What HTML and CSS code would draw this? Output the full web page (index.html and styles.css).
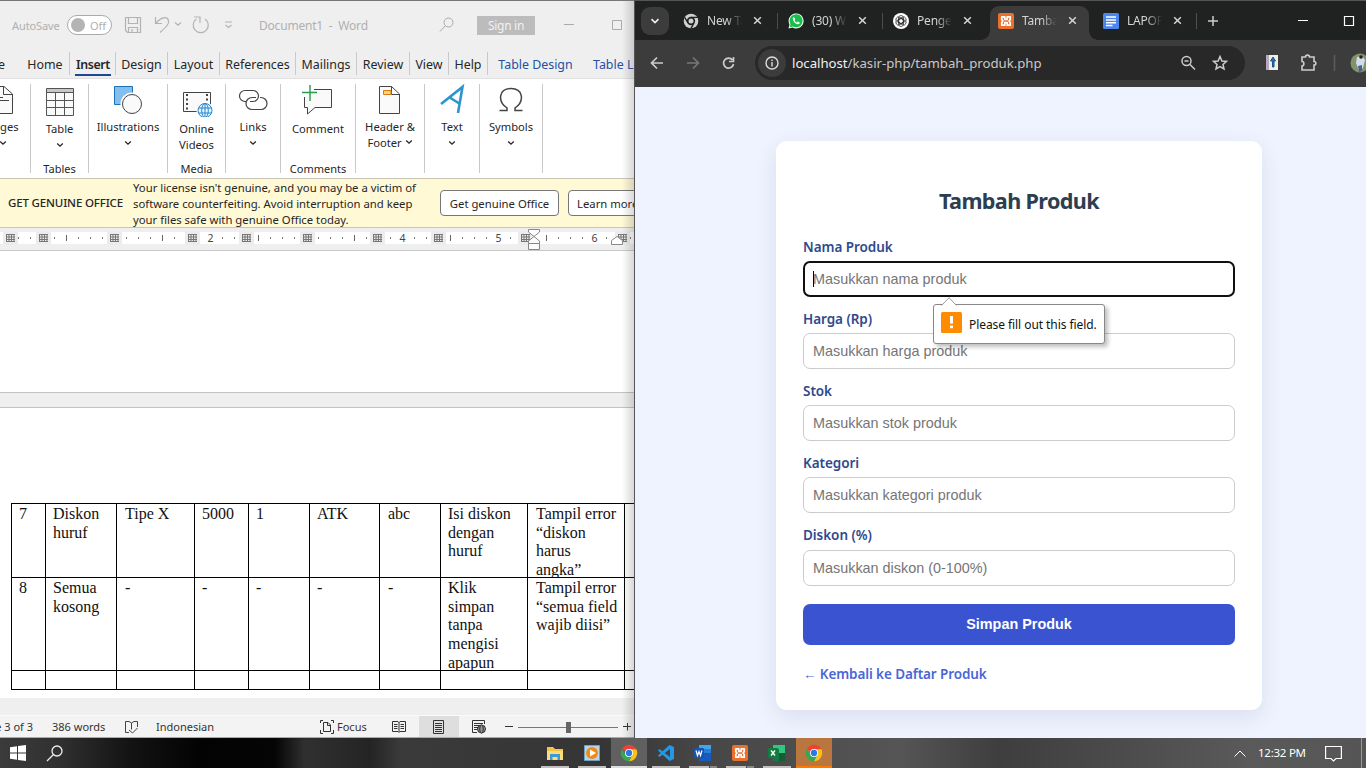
FILE: index.html
```html
<!DOCTYPE html>
<html lang="id">
<head>
<meta charset="utf-8">
<title>Tambah Produk</title>
<link rel="stylesheet" href="styles.css">
</head>
<body>
<svg width="0" height="0" class="defs">
  <symbol id="chev" viewBox="0 0 8 6"><path d="M1.2 1.5 4 4.2 6.8 1.5" fill="none" stroke="currentColor" stroke-width="1.3"/></symbol>
  <symbol id="close" viewBox="0 0 10 10"><path d="M1.3 1.3 8.7 8.7M8.7 1.3 1.3 8.7" stroke="currentColor" stroke-width="1.7"/></symbol>
  <symbol id="chrome" viewBox="0 0 24 24">
    <path d="M12 12 2.5 6.5A11 11 0 0 1 21.5 6.5L12 7Z" fill="#ea4335"/>
    <path d="M12 12 12 7H21.8A11 11 0 0 1 12 23L16.3 14.5Z" fill="#fbc116"/>
    <path d="M12 12 16.3 14.5 12 23A11 11 0 0 1 2.5 6.5L7.7 14.5Z" fill="#34a853"/>
    <circle cx="12" cy="12" r="5.3" fill="#fff"/><circle cx="12" cy="12" r="4.2" fill="#2878e8"/>
  </symbol>
  <symbol id="xampp" viewBox="0 0 16 16"><rect width="16" height="16" rx="2" fill="#ec702c"/><path d="M6.800 3.800H3.800V6.700L5 8 3.800 9.300V12.200H6.800V9.600H9.200V12.200H12.200V9.300L11 8 12.200 6.700V3.800H9.200V6.400H6.800Z" fill="none" stroke="#fff" stroke-width="1.700" stroke-linejoin="round"/></symbol>
</svg>
<div class="desktop">
  <main class="windows">
    <section class="word">
      <header class="w-title">
        <span class="autosave">AutoSave</span>
        <span class="toggle"><i></i>Off</span>
        <svg class="qat" width="110" height="20" viewBox="0 0 110 20" fill="none" stroke="#b3b3b3" stroke-width="1.2">
          <path d="M1.5 2.5H16.500V17.500H3.500L1.500 15.500ZM4.500 2.500V8.500H13.500V2.500M4.500 17.500V12.500H13.500V17.500M8 17.500V14"/>
          <path d="M31.500 2V8.500H38M32 8C37 2 43 1 44.500 5.500 45.500 9 42 12 36 17.500"/>
          <path d="M51 7.500 54 10.200 57 7.500M72.500 4A7.500 7.500 0 1 0 81 4M76 8V2H70"/>
          <path d="M101 7H108M101.500 10 104.500 12.500 107.500 10"/>
        </svg>
        <span class="docname">Document1 &nbsp;-&nbsp; Word</span>
        <svg class="w-search" width="16" height="16" viewBox="0 0 16 16" fill="none" stroke="#aaa"><circle cx="9.500" cy="5.500" r="4.500"/><path d="M6 9 1 14.500"/></svg>
        <span class="signin">Sign in</span>
        <svg class="w-ctl" width="60" height="12" viewBox="0 0 60 12" fill="none" stroke="#aaa"><path d="M0 5.500H10M48.500 1.500H57.500V10.500H48.500Z"/></svg>
      </header>
      <nav class="w-tabs">
        <span class="t-file">e</span><span class="t-home">Home</span><span class="t-insert"><b>Insert</b></span><span class="t-design">Design</span><span class="t-layout">Layout</span><span class="t-ref">References</span><span class="t-mail">Mailings</span><span class="t-review">Review</span><span class="t-view">View</span><span class="t-help">Help</span><span class="t-td">Table Design</span><span class="t-tl">Table L</span>
      </nav>
      <div class="ribbon">
        <div class="grp g-pages"><svg class="ico" width="34" height="34" viewBox="0 0 34 34" fill="#fafafa" stroke="#444"><path d="M1 3.500H16L24.500 11V30.500H1"/><path d="M15.500 3.500V11.500H24M1 14.500H15M1 17.500H21" fill="none"/></svg><p>ges</p><svg class="cv"><use href="#chev"/></svg></div>
        <div class="grp g-table"><svg class="ico" width="34" height="34" viewBox="0 0 34 34" fill="#fafafa" stroke="#555"><path d="M3.500 5.500H30.500V32.500H3.500Z"/><path d="M4 6H30V9H4Z" fill="#c8c8c8" stroke="none"/><path d="M3.500 9.500H30.500M3.500 17.500H30.500M3.500 24.500H30.500M12.500 9.500V32.500M21.500 9.500V32.500" fill="none"/></svg><p class="low">Table</p><svg class="cv"><use href="#chev"/></svg><em>Tables</em></div>
        <div class="grp g-ill"><svg class="ico" width="34" height="34" viewBox="0 0 34 34"><path d="M3.500 3.500H21.500V21.500H3.500Z" fill="#83beec" stroke="#1e70b8"/><circle cx="21" cy="21" r="11.500" fill="#fff"/><circle cx="21" cy="21" r="9.500" fill="#fafafa" stroke="#444"/></svg><p>Illustrations</p><svg class="cv"><use href="#chev"/></svg></div>
        <div class="grp g-video"><svg class="ico" width="34" height="34" viewBox="0 0 34 34" fill="none" stroke="#444"><path d="M3.500 9.500H30.500V28.500H3.500Z" fill="#fafafa"/><path d="M7 11V27M27 11V18" stroke-dasharray="2 2.500" stroke-width="2"/><circle cx="25" cy="27.500" r="8.500" fill="#fff" stroke="none"/><g stroke="#2287d0"><circle cx="25" cy="27.500" r="7" fill="#e8f5ff"/><ellipse cx="25" cy="27.500" rx="3.300" ry="7"/><path d="M18.500 25H31.500M18.500 30H31.500M25 20.500V34.500"/></g></svg><p class="low">Online<br>Videos</p><em>Media</em></div>
        <div class="grp g-links"><svg class="ico" width="34" height="34" viewBox="0 0 34 34" fill="none" stroke="#444" stroke-width="1.200"><path d="M10 18.500H9A5.500 5.500 0 0 1 9 7.500H17A5.500 5.500 0 0 1 17 18.500H14"/><path d="M24 14.500H25A5.500 5.500 0 0 1 25 26.500H16A6 6 0 0 1 16 14.500H20"/></svg><p>Links</p><svg class="cv"><use href="#chev"/></svg></div>
        <div class="grp g-comment"><svg class="ico" width="34" height="34" viewBox="0 0 34 34" fill="none" stroke="#444"><path d="M13 6.500H30.500V24.500H14L6.500 31V24.500H3.500V14" fill="#fafafa"/><path d="M9 2V18M1 9.500H16" stroke="#249b4d" stroke-width="1.400"/></svg><p class="low">Comment</p><em>Comments</em></div>
        <div class="grp g-header"><svg class="ico" width="34" height="34" viewBox="0 0 34 34" fill="#fafafa" stroke="#444"><path d="M6.500 3.500H18.500L26.500 11V30.500H6.500ZM18.500 3.500V11.500H26"/><path d="M10.500 7.500H18V11.500H10.500Z" fill="#fbd27d" stroke="#d87912"/></svg><p>Header &amp;<br>Footer <svg class="cv in"><use href="#chev"/></svg></p></div>
        <div class="grp g-text"><svg class="ico" width="34" height="34" viewBox="0 0 34 34" fill="none" stroke="#2c94cf" stroke-width="2.600"><path d="M6 21 27.500 4 23 30M14 14 25 21"/></svg><p>Text</p><svg class="cv"><use href="#chev"/></svg></div>
        <div class="grp g-sym"><svg class="ico" width="34" height="34" viewBox="0 0 34 34" fill="none" stroke="#444" stroke-width="1.500"><path d="M5.500 27.500H13V25C3 18 5 5.500 17 5.500 29 5.500 31 18 21 25V27.500H28.500"/></svg><p>Symbols</p><svg class="cv"><use href="#chev"/></svg></div>
      </div>
      <div class="license">
        <strong>GET GENUINE OFFICE</strong>
        <p>Your license isn't genuine, and you may be a victim of<br>software counterfeiting. Avoid interruption and keep<br>your files safe with genuine Office today.</p>
        <span class="wbtn get">Get genuine Office</span><span class="wbtn learn">Learn more</span>
      </div>
      <svg class="ruler" width="634" height="22" viewBox="0 0 634 22">
        <defs>
          <pattern id="dots" x="6" width="12" height="20" patternUnits="userSpaceOnUse"><rect y="9" width="1" height="2" fill="#777"/></pattern>
          <pattern id="half" x="66" width="96" height="23" patternUnits="userSpaceOnUse"><rect y="7" width="1" height="6" fill="#666"/></pattern>
          <g id="mark"><rect x="-7" y="3" width="15" height="14" fill="#ececec"/><path d="M-3.500 6V14M-1 6V14M1.500 6V14M4 6V14M-4 6.500H5M-4 9H5M-4 11.500H5M-4 13.500H5" stroke="#777"/></g>
        </defs>
        <rect width="634" height="23" fill="#efefef"/><rect y="4" width="634" height="12" fill="#fff"/>
        <rect y="0" width="634" height="20" fill="url(#dots)"/><rect width="634" height="20" fill="url(#half)"/>
        <use href="#mark" x="10"/><use href="#mark" x="43"/><use href="#mark" x="114"/><use href="#mark" x="192"/><use href="#mark" x="246"/><use href="#mark" x="307"/><use href="#mark" x="377"/><use href="#mark" x="438"/><use href="#mark" x="525"/><use href="#mark" x="622"/>
        <g class="nums"><path d="M206 4h9v12h-9zM398 4h9v12h-9zM494 4h9v12h-9zM590 4h9v12h-9z" fill="#fff"/><text x="210.500" y="14">2</text><text x="402.500" y="14">4</text><text x="498.500" y="14">5</text><text x="594.500" y="14">6</text></g>
        <g fill="#fff" stroke="#888"><path d="M528.500 1.500H539.500V4L534 8.500 528.500 4ZM528.500 15.500V13L534 8.500 539.500 13V15.500ZM528.500 15.500H539.500V21.500H528.500ZM611.500 16.500V12.500L617 8.500 622.500 12.500V16.500Z"/></g>
      </svg>
      <div class="pages">
        <div class="sheet upper"></div>
        <div class="sheet lower">
          <table>
            <colgroup><col class="c1"><col class="c2"><col class="c3"><col class="c4"><col class="c5"><col class="c6"><col class="c7"><col class="c8"><col class="c9"><col class="c10"></colgroup>
            <tr class="r1"><td>7</td><td>Diskon<br>huruf</td><td>Tipe X</td><td>5000</td><td>1</td><td>ATK</td><td>abc</td><td>Isi diskon<br>dengan<br>huruf</td><td><div class="clip">Tampil error<br>“diskon<br>harus<br>angka”</div></td><td></td></tr>
            <tr class="r2"><td>8</td><td>Semua<br>kosong</td><td>-</td><td>-</td><td>-</td><td>-</td><td>-</td><td><div class="clip">Klik<br>simpan<br>tanpa<br>mengisi<br>apapun</div></td><td>Tampil error<br>“semua field<br>wajib diisi”</td><td></td></tr>
            <tr class="r3"><td></td><td></td><td></td><td></td><td></td><td></td><td></td><td></td><td></td><td></td></tr>
          </table>
        </div>
      </div>
      <footer class="status">
        <span class="s-page">Page 3 of 3</span><span class="s-words">386 words</span>
        <svg class="s-proof" width="15" height="14" viewBox="0 0 15 14" fill="none" stroke="#444"><path d="M5 12.500H1.500V1.500H5L7.500 3 10 1.500H13.500V7M7.500 3V9.500M5 10 8.500 13 13.500 8"/></svg>
        <span class="s-lang">Indonesian</span>
        <svg class="s-focus" width="14" height="14" viewBox="0 0 14 14" fill="none" stroke="#333"><path d="M3 .500H.500V3M.500 10V13.500H3M11 .500H13.500V3M13.500 10V13.500H11M3.500 2.500H8L10.500 5V11.500H3.500ZM7.500 2.500V5.500H10"/></svg>
        <span class="s-ft">Focus</span>
        <span class="view v1"><svg width="14" height="14" viewBox="0 0 14 14" fill="none" stroke="#333"><path d="M.500 1.500H6L7 2.500 8 1.500H13.500V11.500H8L7 12.500 6 11.500H.500ZM7 2V12M2 4.500H5.500M2 6.500H5.500M2 8.500H5.500M8.500 4.500H12M8.500 6.500H12M8.500 8.500H12"/></svg></span>
        <span class="view v2"><svg width="12" height="14" viewBox="0 0 12 14" fill="none" stroke="#333"><path d="M.500 .500H10.500V13.500H.500ZM2 3.500H9M2 5.500H9M2 7.500H9M2 9.500H9M2 11.500H9"/></svg></span>
        <span class="view v3"><svg width="15" height="14" viewBox="0 0 15 14" fill="none" stroke="#333"><path d="M5 12.500H.500V.500H12.500V4M2 3.500H11M2 5.500H8M2 7.500H6M2 9.500H5"/><circle cx="9.500" cy="9" r="4"/><ellipse cx="9.500" cy="9" rx="1.800" ry="4"/><path d="M5.500 9H13.500M6 7H13M6 11H13"/></svg></span>
        <svg class="zoom" width="129" height="14" viewBox="0 0 129 14"><path d="M0 6.500H8M118 6.500H126M122.500 3V10.500" stroke="#333"/><path d="M13 7.500H113" stroke="#777"/><rect x="61" y="2" width="5" height="11" fill="#666"/></svg>
      </footer>
      <i class="edge"></i>
    </section>

    <section class="browser">
      <div class="strip">
        <span class="list"><svg width="10" height="8" viewBox="0 0 8 6"><use href="#chev"/></svg></span>
        <div class="tab"><svg width="16" height="16" viewBox="0 0 24 24"><circle cx="12" cy="12" r="11" fill="#cfcfcf"/><circle cx="12" cy="12" r="5" fill="#cfcfcf" stroke="#202121" stroke-width="2.500"/><path d="M12 6.500H22M7.500 15 2.500 6.500M16.500 15 12 23" stroke="#202121" stroke-width="2"/></svg><span>New Tab</span><svg class="x"><use href="#close"/></svg></div>
        <div class="tab sep"><svg width="16" height="16" viewBox="0 0 16 16"><path d="M.500 15.500 1.500 11.500A7.500 7.500 0 1 1 4.500 14.500Z" fill="#fff"/><path d="M1.700 14.300 2.500 11.200A6.500 6.500 0 1 1 4.900 13.500Z" fill="#18bf4b"/><path d="M5 4.500C4 7 7.500 12 11 11 12 10.500 11.800 9.500 11.500 9.300L9.800 8.500 9 9.500C8 9.200 7 8.200 6.500 7.200L7.200 6.300 6.500 4.500Z" fill="#fff"/></svg><span>(30) What</span><svg class="x"><use href="#close"/></svg></div>
        <div class="tab sep"><svg width="16" height="16" viewBox="0 0 16 16"><circle cx="8" cy="8" r="8" fill="#fff"/><g fill="none" stroke="#333" stroke-width=".800"><rect x="5.500" y="2.500" width="5" height="8" rx="2.500"/><rect x="5.500" y="2.500" width="5" height="8" rx="2.500" transform="rotate(60 8 8)"/><rect x="5.500" y="2.500" width="5" height="8" rx="2.500" transform="rotate(120 8 8)"/><rect x="5.500" y="2.500" width="5" height="8" rx="2.500" transform="rotate(180 8 8)"/><rect x="5.500" y="2.500" width="5" height="8" rx="2.500" transform="rotate(240 8 8)"/><rect x="5.500" y="2.500" width="5" height="8" rx="2.500" transform="rotate(300 8 8)"/></g></svg><span>Pengem</span><svg class="x"><use href="#close"/></svg></div>
        <div class="tab active"><svg width="16" height="16"><use href="#xampp"/></svg><span>Tambah</span><svg class="x"><use href="#close"/></svg></div>
        <div class="tab"><svg width="16" height="16" viewBox="0 0 16 16"><rect width="16" height="16" rx="1.500" fill="#4a86ee"/><path d="M3 4H13M3 7H13M3 9.800H13M3 12.500H9.500" stroke="#fff" stroke-width="1.500"/></svg><span>LAPORAN</span><svg class="x"><use href="#close"/></svg></div>
        <svg class="newtab" width="170" height="20" viewBox="0 0 170 20" fill="none"><path d="M.500 2V18" stroke="#505050"/><path d="M12 10H22M17 5V15" stroke="#ccc" stroke-width="1.500"/><path d="M102 9.500H112M148.500 5.500H157.500V14.500H148.500Z" stroke="#fff" stroke-width="1.200"/></svg>
      </div>
      <div class="toolbar">
        <svg class="nav" width="90" height="16" viewBox="0 0 90 16" fill="none" stroke-width="1.700"><path d="M14 8H3M8 2.500 2.500 8 8 13.500" stroke="#ccc"/><path d="M38 8H49M44 2.500 49.500 8 44 13.500" stroke="#777"/><path d="M83.500 5A5 5 0 1 0 84.500 9M84.500 2V6.500H80" stroke="#ccc"/></svg>
        <div class="url"><span class="info"><svg width="16" height="16" viewBox="0 0 16 16" fill="none" stroke="#ddd" stroke-width="1.400"><circle cx="8" cy="8" r="6"/><path d="M8 7V11.500M8 4.500V6"/></svg></span><span class="addr"><b>localhost</b>/kasir-php/tambah_produk.php</span>
          <svg width="50" height="16" viewBox="0 0 50 16" fill="none" stroke="#ccc" stroke-width="1.500"><circle cx="6.500" cy="6" r="4.500"/><path d="M10 9.500 15 14.500M4.500 6H8.500"/><path d="M40 1.500 41.900 6 46.500 6.400 43 9.500 44 14 40 11.600 36 14 37 9.500 33.500 6.400 38.100 6Z"/></svg></div>
        <svg class="ext" width="104" height="24" viewBox="0 0 104 24"><rect x="1" y="4" width="12" height="15" fill="#f1eee4"/><rect x="1" y="4" width="3" height="15" fill="#b9a8bd"/><path d="M7.500 16V10H5.500L8 6 10.500 10H9V16Z" fill="#2173bd" stroke="#17578f"/><path d="M37 6H40.500C40.500 3.500 44.500 3.500 44.500 6H49V10.500C51.500 10.500 51.500 14 49 14V19H37V15C39.500 15 39.500 10.500 37 10.500Z" fill="none" stroke="#ccc" stroke-width="1.600"/><path d="M69.500 4V20" stroke="#5c5c5c" stroke-width="1.500"/><circle cx="95" cy="12" r="9.500" fill="#829369"/><path d="M92 6 97 5 100 9 98 17 94 20 91 12Z" fill="#d4dcec"/><path d="M93 15 97 14 97 20 94 21Z" fill="#48628f"/><circle cx="96" cy="6" r="1.800" fill="#222"/></svg>
      </div>
      <div class="site">
        <form class="card">
          <h1>Tambah Produk</h1>
          <label>Nama Produk</label><div class="field focus"><i class="caret"></i>Masukkan nama produk</div>
          <label>Harga (Rp)</label><div class="field">Masukkan harga produk</div>
          <label>Stok</label><div class="field">Masukkan stok produk</div>
          <label>Kategori</label><div class="field">Masukkan kategori produk</div>
          <label>Diskon (%)</label><div class="field f5">Masukkan diskon (0-100%)</div>
          <div class="save">Simpan Produk</div>
          <a>← Kembali ke Daftar Produk</a>
          <div class="tip"><svg class="arrow" width="16" height="9" viewBox="0 0 16 9"><path d="M.500 8.500 8 .700 15.500 8.500" fill="#fff" stroke="#999"/><path d="M1 8.500H15" stroke="#fff"/></svg><svg width="21" height="21" viewBox="0 0 21 21"><rect width="21" height="21" rx="1.500" fill="#ff8c00"/><path d="M10.500 4V11.500M10.500 13.500V16.300" stroke="#fff" stroke-width="3"/></svg><span>Please fill out this field.</span></div>
        </form>
      </div>
    </section>
  </main>

  <footer class="taskbar">
    <svg class="start" width="16" height="16" viewBox="0 0 16 16" fill="#fff"><path d="M0 2.200 7 1.200V7.500H0ZM8 1 16 0V7.500H8ZM0 8.500H7V14.800L0 13.800ZM8 8.500H16V16L8 15Z"/></svg>
    <svg class="t-search" width="17" height="17" viewBox="0 0 17 17" fill="none" stroke="#eee" stroke-width="1.300"><circle cx="11" cy="6" r="5"/><path d="M7.500 9.500 1 16"/></svg>
    <div class="apps">
      <span><svg width="18" height="18" viewBox="0 0 18 18"><path d="M1 3H7L9 5H17V16H1Z" fill="#f6c445"/><path d="M1 7H17V16H1Z" fill="#fddb79"/><path d="M4 16V10H14V16H11.500V13H6.500V16Z" fill="#3d9ad8"/></svg></span>
      <span><svg width="18" height="18" viewBox="0 0 18 18"><path d="M1.500 1.500H16.500V16.500H1.500Z" fill="#b8d5ea" stroke="#6ba1cb"/><circle cx="9" cy="9" r="6" fill="#f38b13"/><path d="M7 5.500V12.500L13 9Z" fill="#fff"/></svg></span>
      <span class="on"><svg width="18" height="18"><use href="#chrome"/></svg></span>
      <span><svg width="18" height="18" viewBox="0 0 18 18"><path d="M12.500 1 17 3V15L12.500 17 1 6.500 2.500 5 13 13V5L2.500 13 1 11.500Z" fill="#2498e5"/></svg></span>
      <span class="multi"><svg width="18" height="18" viewBox="0 0 18 18"><path d="M5 1H17V9H5Z" fill="#41a5ee"/><path d="M5 5H17V9H5Z" fill="#2b7cd3"/><path d="M5 9H17V17H5Z" fill="#185abd"/><rect y="4" width="10" height="10" rx="1" fill="#1654ae"/><path d="M2 6.500 3.500 11.500 5 7.500 6.500 11.500 8 6.500" fill="none" stroke="#fff" stroke-width="1.200"/></svg></span>
      <span class="multi"><svg width="16" height="16"><use href="#xampp"/></svg></span>
      <span><svg width="18" height="18" viewBox="0 0 18 18"><path d="M5 1H17V9H5Z" fill="#33c481"/><path d="M5 5H11V17H5Z" fill="#107c41"/><path d="M11 9H17V17H11Z" fill="#185c37"/><rect y="4" width="10" height="10" rx="1" fill="#107c41"/><path d="M3 6.500 7 11.500M7 6.500 3 11.500" stroke="#fff" stroke-width="1.400"/></svg></span>
      <span class="alert"><svg width="18" height="18"><use href="#chrome"/></svg></span>
    </div>
    <svg class="up" width="12" height="7" viewBox="0 0 12 7" fill="none" stroke="#fff"><path d="M.500 6.500 6 1 11.500 6.500"/></svg>
    <time>12:32 PM</time>
    <svg class="note" width="17" height="17" viewBox="0 0 17 17" fill="none" stroke="#fff" stroke-width="1.200"><path d="M.600 1.500H16.400V13.500H11L8.500 16 6 13.500H.600Z"/></svg>
    <i class="peek"></i>
  </footer>
</div>
</body>
</html>
```
FILE: styles.css
```css
* { box-sizing: border-box; }
body { margin: 0; width: 1366px; height: 768px; overflow: hidden; font-family: "Noto Sans", "Open Sans", sans-serif; }
p, h1 { margin: 0; }
svg { flex: none; display: block; }
.defs { position: absolute; }
.desktop { display: flex; flex-direction: column; height: 768px; }
.windows { display: flex; height: 738px; }

/* Word window */
.word { position: relative; width: 634px; height: 738px; overflow: hidden; background: #efefef; display: flex; flex-direction: column; border-top: 1px solid #77757a; color: #262626; }
.edge { position: absolute; right: 0; top: 0; width: 12px; height: 738px; background: linear-gradient(90deg, transparent, rgba(60,60,70,.2)); }
.w-title { height: 48px; flex: none; display: flex; align-items: center; color: #b0b0b0; font-size: 12px; padding-left: 12px; white-space: nowrap; }
.autosave { width: 55px; font-size: 11px; letter-spacing: -.1px; }
.toggle { width: 45px; height: 20px; border: 1px solid #aaa; border-radius: 10px; background: #fff; font-size: 11px; display: flex; align-items: center; gap: 5px; padding-left: 3px; }
.toggle i { width: 14px; height: 14px; border-radius: 50%; background: #b4b4b4; }
.qat { margin-left: 12px; }
.docname { margin-left: 25px; width: 126px; padding-top: 1px; letter-spacing: -.2px; }
.w-search { margin-left: 54px; }
.signin { margin-left: 22px; width: 58px; height: 19px; background: #bcbcbc; color: #f2f2f2; text-align: center; line-height: 20px; letter-spacing: -.3px; }
.w-ctl { margin-left: 29px; }
.w-tabs { height: 30px; flex: none; display: flex; padding-top: 3px; border-bottom: 1px solid #e0e0e0; font-size: 12.400px; }
.w-tabs span { height: 23px; border-right: 1px solid #c9c9c9; text-align: center; white-space: nowrap; line-height: 25px; }
.w-tabs .t-file { width: 21px; border: 0; text-align: left; text-indent: -2px; }
.t-home { width: 49px; } .t-insert { width: 46px; } .t-design { width: 52px; } .t-layout { width: 52px; } .t-ref { width: 76px; } .t-mail { width: 61px; } .t-review { width: 53px; } .t-view { width: 39px; } .t-help { width: 39px; }
.w-tabs .t-td, .w-tabs .t-tl { color: #2450a4; border: 0; }
.t-td { width: 95px; } .t-tl { padding-left: 10px; }
.t-insert b { display: block; margin: 0 4px 0 5px; font-weight: 600; letter-spacing: -.4px; border-bottom: 2px solid #1c4796; height: 24px; }
.ribbon { height: 99px; flex: none; background: #fff; display: flex; padding-top: 5px; font-size: 11.200px; }
.grp { height: 89px; flex: none; border-right: 1px solid #c9c9c9; display: flex; flex-direction: column; align-items: center; position: relative; line-height: 16px; text-align: center; white-space: nowrap; }
.grp p { margin-top: 2px; }
.grp .low { margin-top: 4px; }
.ico { margin-top: -1px; }
.cv { width: 8px; height: 6px; margin-top: 5px; }
.cv.in { display: inline-block; margin: 0 0 2px; }
.grp em { position: absolute; bottom: -4px; font-style: normal; font-size: 11px; }
.g-pages { width: 31px; align-items: flex-start; }
.g-pages .ico { margin-left: -12px; }
.g-pages .cv { margin-left: -1px; }
.g-table { width: 58px; } .g-ill { width: 79px; } .g-video { width: 58px; } .g-links { width: 55px; } .g-comment { width: 75px; } .g-header { width: 69px; } .g-text { width: 55px; } .g-sym { width: 63px; }
.license { height: 50px; flex: none; border-top: 1px solid #c9c6b5; border-bottom: 1px solid #c9c6b5; background: #fff9d6; display: flex; align-items: center; padding-left: 8px; font-size: 11.300px; line-height: 16px; white-space: nowrap; }
.license strong { width: 125px; flex: none; font-weight: 500; font-size: 11.500px; letter-spacing: -.15px; }
.license p { width: 307px; flex: none; padding-top: 2px; }
.wbtn { height: 26px; flex: none; border: 1px solid #777; border-radius: 4px; background: #fff; line-height: 25px; text-align: center; }
.get { width: 119px; } .learn { width: 90px; margin-left: 9px; text-align: left; padding-left: 8px; }
.ruler { box-sizing: content-box; border-bottom: 1px solid #c9c9c9; }
.nums text { font: 10.500px "Noto Sans", sans-serif; fill: #444; text-anchor: middle; }
.pages { height: 464px; flex: none; }
.sheet { background: #fff; }
.upper { height: 142px; border-bottom: 1px solid #c3c3c3; margin-bottom: 14px; }
.lower { height: 291px; border-top: 1px solid #c3c3c3; padding: 95px 0 0 11px; }
table { border-collapse: collapse; table-layout: fixed; width: 683px; font: 16px/18.700px "Liberation Serif", serif; color: #111; }
td { border: 1px solid #000; padding: 1px 0 0 7px; vertical-align: top; white-space: nowrap; }
.c1 { width: 34px; } .c2 { width: 71px; } .c3 { width: 78px; } .c4 { width: 54px; } .c5 { width: 61px; } .c6 { width: 70px; } .c7 { width: 61px; } .c8 { width: 87px; } .c9 { width: 97px; } .c10 { width: 70px; }
td:nth-child(3), td:nth-child(7), td:nth-child(9) { padding-left: 8px; }
.r1 { height: 74px; } .r2 { height: 93px; } .r3 { height: 19px; }
.clip { height: 72px; overflow: hidden; }
.r2 .clip { height: 91px; }
.status { height: 23px; flex: none; background: #f3f3f3; border-top: 1px solid #fafafa; border-bottom: 1px solid #aaa; display: flex; align-items: center; font-size: 11px; white-space: nowrap; color: #333; }
.s-page { width: 52px; display: flex; justify-content: flex-end; padding-right: 19px; flex: none; }
.s-words { width: 72px; } .s-lang { width: 164px; padding-left: 17px; }
.s-focus { margin-left: 17px; }
.s-ft { margin-left: 3px; width: 45px; }
.view { width: 40px; height: 21px; display: flex; align-items: center; justify-content: center; flex: none; }
.v1 { margin-left: -3px; }
.v2 { background: #dedede; }
.zoom { margin-left: 6px; }

/* Browser window */
.browser { width: 732px; display: flex; flex-direction: column; border-left: 1px solid #555; border-top: 1px solid #555; overflow: hidden; }
.strip { height: 39px; flex: none; background: #202121; display: flex; align-items: center; padding-left: 6px; color: #d4d4d4; }
.list { width: 28px; height: 28px; border-radius: 9px; background: #3c3c3c; display: flex; align-items: center; justify-content: center; color: #eee; margin-right: 3px; }
.tab { width: 105px; height: 34px; display: flex; align-items: center; padding-left: 11px; font-size: 12px; letter-spacing: -.2px; position: relative; flex: none; }
.tab span { width: 35px; margin: 0 11px 0 8px; overflow: hidden; white-space: nowrap; -webkit-mask-image: linear-gradient(90deg, #000 55%, transparent); mask-image: linear-gradient(90deg, #000 55%, transparent); }
.x { width: 9px; height: 9px; }
.tab.sep { background: linear-gradient(#4b4b4b, #4b4b4b) 0 50% / 1px 16px no-repeat; }
.tab.active { width: 99px; margin: 0 3px; padding-left: 8px; background: #3c3c3c; border-radius: 9px 9px 0 0; height: 34px; align-self: flex-end; padding-bottom: 5px; }
.tab.active::before, .tab.active::after { content: ""; position: absolute; bottom: 0; width: 9px; height: 9px; }
.tab.active::before { left: -9px; background: radial-gradient(circle at 0 0, transparent 8.500px, #3c3c3c 9px); }
.tab.active::after { right: -9px; background: radial-gradient(circle at 100% 0, transparent 8.500px, #3c3c3c 9px); }
.newtab { margin-left: -1px; }
.toolbar { height: 47px; flex: none; background: #3c3c3c; display: flex; align-items: center; padding: 0 0 2px 14px; }
.nav { margin-right: 16px; }
.url { width: 490px; flex: none; height: 34px; border-radius: 17px; background: #282828; display: flex; align-items: center; padding-left: 3px; }
.info { width: 28px; height: 28px; border-radius: 50%; background: #3c3c3c; display: flex; align-items: center; justify-content: center; }
.addr { margin-left: 6px; width: 388px; font-size: 13.200px; letter-spacing: -.02px; color: #c9c9c9; white-space: nowrap; }
.addr b { font-weight: 400; color: #f1f1f1; }
.ext { margin-left: 20px; }
.site { flex: 1; background: #eff3ff; padding: 54px 0 0 141px; }
.card { width: 486px; height: 569px; position: relative; background: #fff; border-radius: 11px; padding: 43px 27px 0; box-shadow: 0 7px 22px rgba(40,50,90,.1); }
h1 { font-size: 21.600px; letter-spacing: -.62px; line-height: 34px; text-align: center; color: #2c3e50; font-weight: 700; margin-bottom: 19px; }
label { display: block; height: 20px; line-height: 20px; font-size: 13.500px; letter-spacing: -.05px; font-weight: 600; color: #2f4a8c; margin-bottom: 4px; }
.field { height: 36px; border: 1px solid #ccc; border-radius: 7px; padding-left: 9px; line-height: 34px; font-family: "Liberation Sans", Arial, sans-serif; font-size: 14.400px; color: #757575; margin-bottom: 12px; position: relative; }
.field.focus { border: 2px solid #101010; padding-left: 8px; line-height: 32px; }
.caret { position: absolute; left: 8px; top: 8px; width: 1px; height: 16px; background: #000; }
.f5 { margin: 5px 0 18px; }
.save { height: 41px; border-radius: 7px; background: #3a53d0; color: #fff; font: bold 14.400px/41px "Liberation Sans", Arial, sans-serif; text-align: center; }
.card a { display: block; margin-top: 19px; font-size: 13.500px; letter-spacing: -.1px; line-height: 20px; font-weight: 600; color: #4a66d6; }
.tip { position: absolute; left: 157px; top: 163px; width: 172px; height: 40px; border: 1px solid #888; border-radius: 3px; background: #fff; box-shadow: 3px 3px 4px rgba(0,0,0,.25); display: flex; align-items: center; padding-left: 7px; font-size: 12px; color: #111; white-space: nowrap; }
.tip svg:not(.arrow) { margin-top: -4px; }
.tip span { margin-left: 7px; letter-spacing: -.07px; }
.arrow { position: absolute; left: 7px; top: -8px; }

/* Taskbar */
.taskbar { height: 30px; display: flex; align-items: center; color: #fff; background: linear-gradient(90deg, #3b3b3b 0, #303030 60px, #131313 130px, #030303 200px, #050505 275px, #303030 305px, #242424 370px, #3a3a3a 400px, #353535 600px, #464646 700px, #555 900px, #3e3e3e 1000px, #5a5a5a 1250px, #555 1366px); }
.start { margin-left: 10px; }
.t-search { margin-left: 20px; width: 17px; }
.apps { display: flex; margin-left: 474px; height: 30px; gap: 1px; }
.apps span { width: 36px; height: 30px; display: flex; align-items: center; justify-content: center; background: linear-gradient(#c3c0bd, #c3c0bd) 50% 100% / 28px 2px no-repeat; }
.apps .on { background: linear-gradient(#ddd, #ddd) 0 100% / 36px 2px no-repeat, #606060; }
.apps .alert { background: linear-gradient(#ff7800, #ff7800) 0 100% / 36px 2px no-repeat, #b9763f; }
.apps .multi { background: linear-gradient(#c3c0bd, #c3c0bd) 4px 100% / 20px 2px no-repeat, linear-gradient(#888, #888) 25px 100% / 7px 2px no-repeat; }
.up { margin-left: 402px; }
time { margin-left: 12px; width: 48px; font-size: 11.500px; letter-spacing: -.25px; white-space: nowrap; margin-top: -2px; }
.note { margin-left: 19px; }
.peek { width: 1px; height: 30px; background: #999; margin-left: 19px; }
```
